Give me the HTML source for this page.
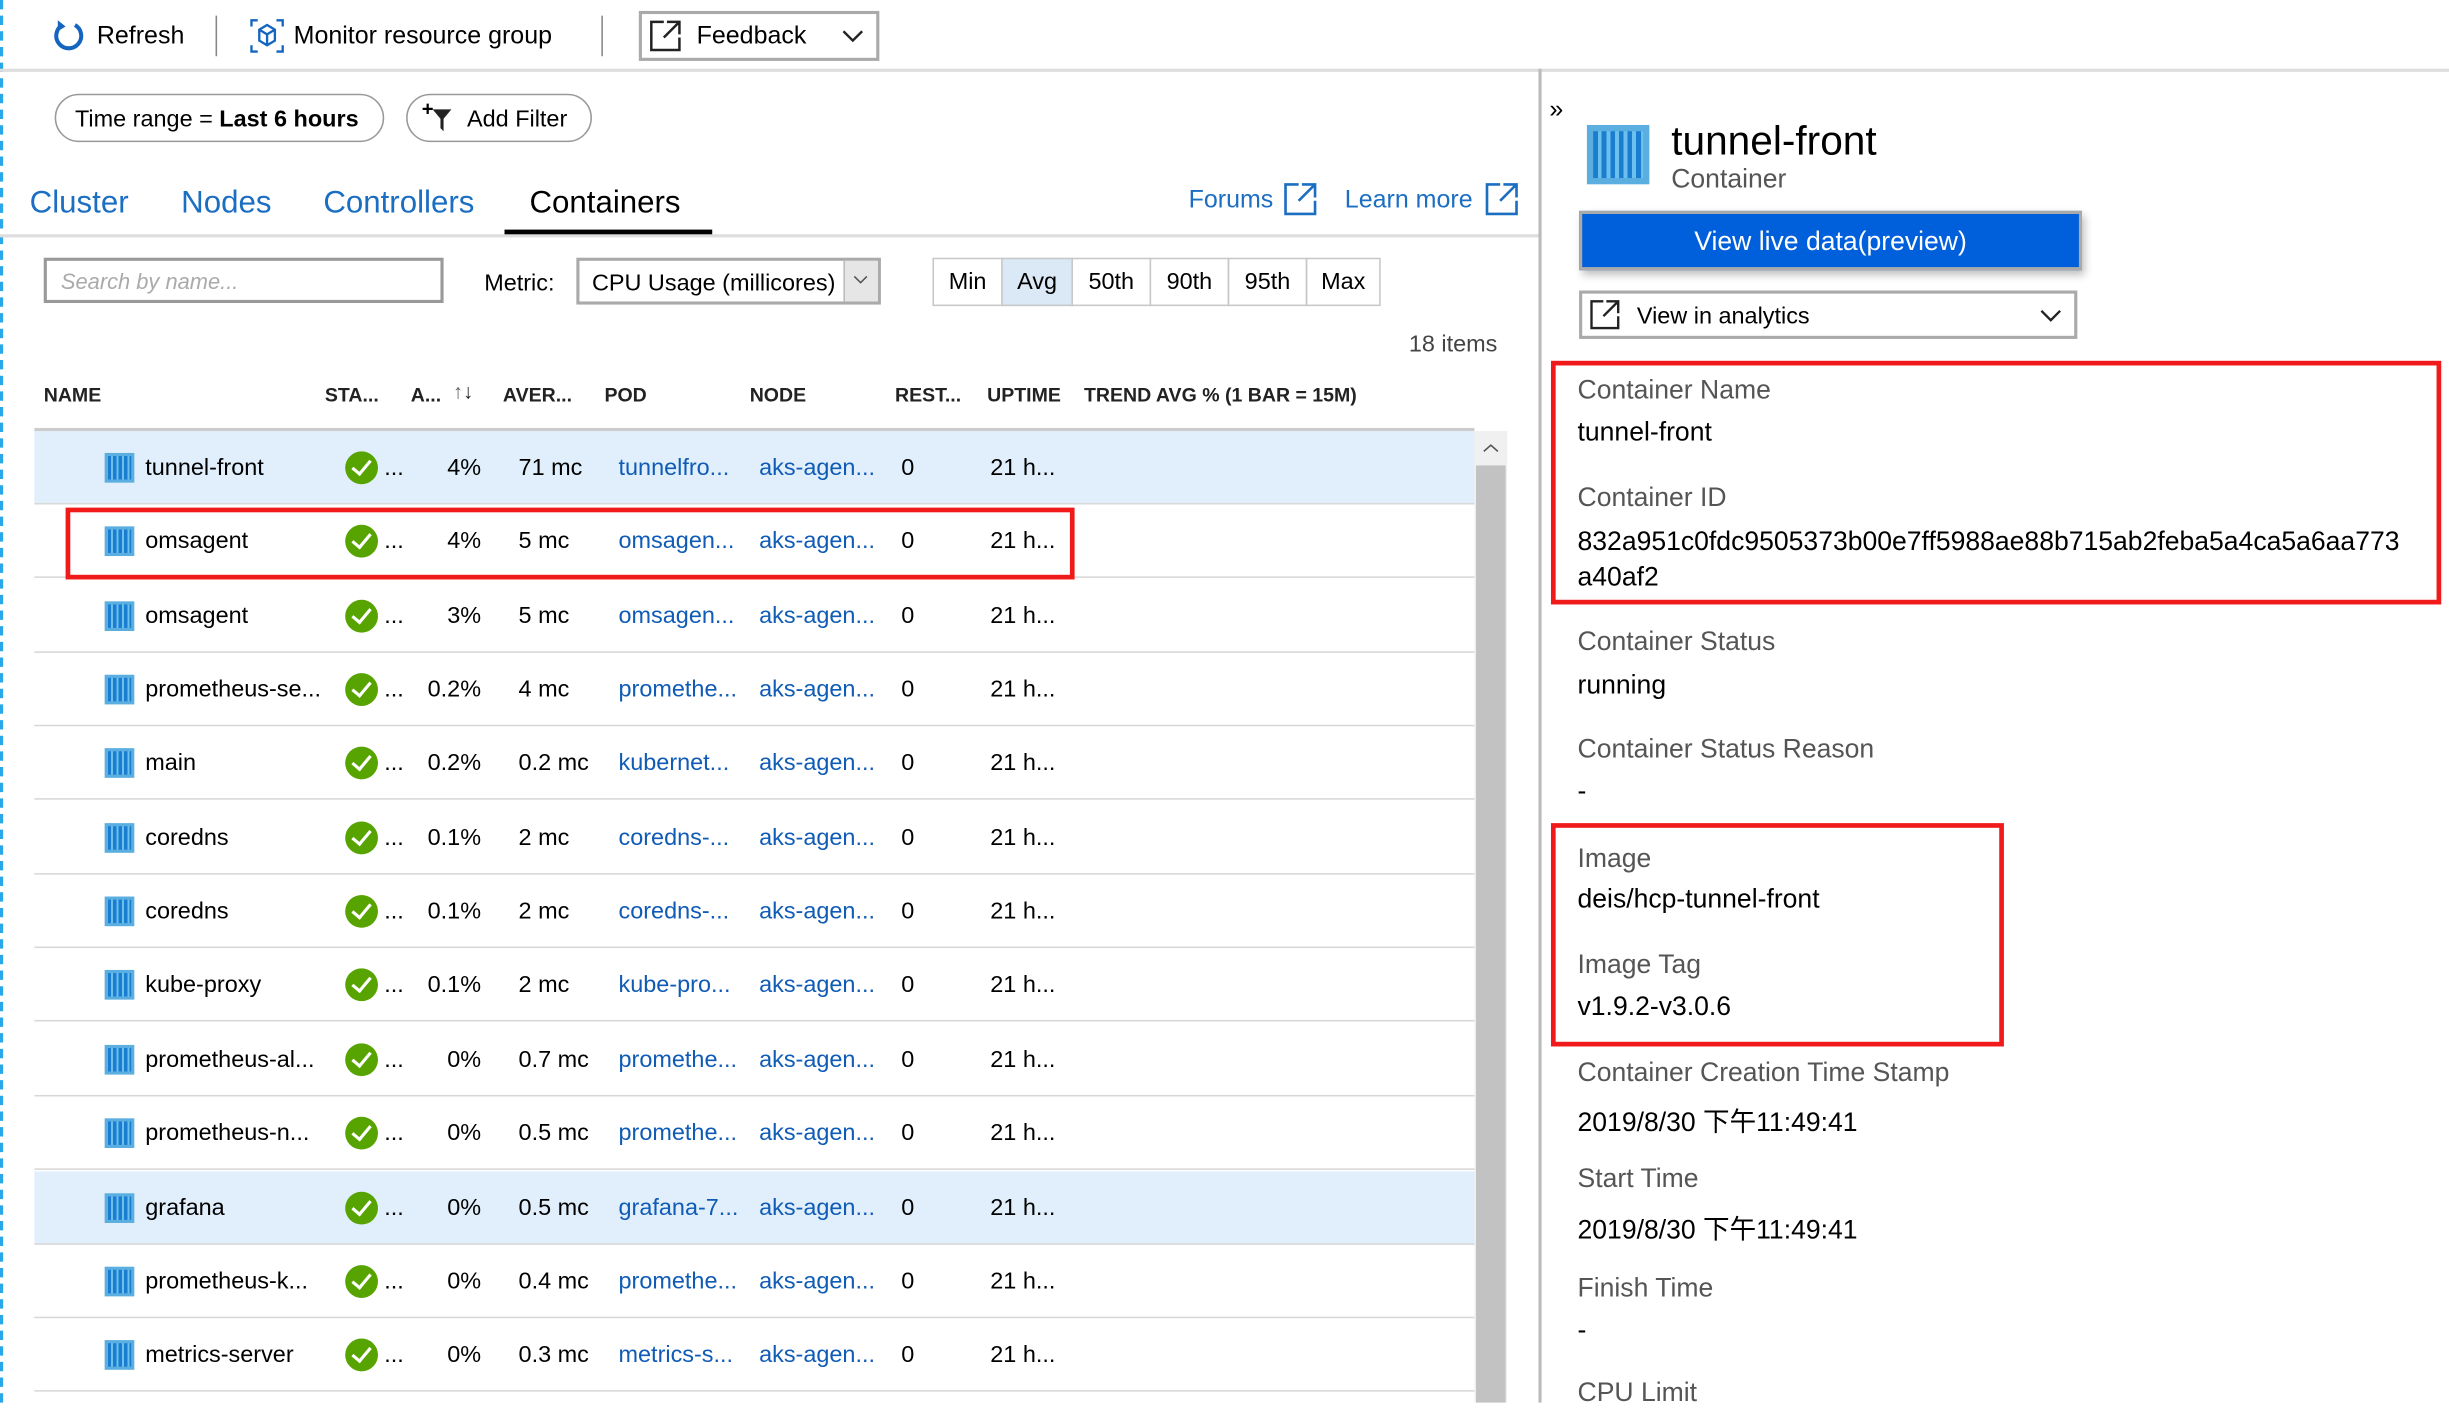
<!DOCTYPE html>
<html><head><meta charset="utf-8"><style>
*{margin:0;padding:0;box-sizing:border-box}
html,body{width:2449px;height:1403px;overflow:hidden;background:#fff}
#w{position:absolute;left:0;top:0;width:1568px;height:898px;transform:scale(1.5619);transform-origin:0 0;font-family:"Liberation Sans","Noto Sans CJK SC",sans-serif;color:#000;font-size:15px}
.a{position:absolute;white-space:nowrap}
.lnk{color:#0f5bb5}
.row{position:absolute;left:22px;width:922px;height:47px;border-bottom:1px solid #d8d8d8}
.row .a{top:15px}
.ic{position:absolute;left:45px;top:14px;width:19px;height:19px;background:#5aaee0;padding:2px}
.ic i{display:block;width:100%;height:100%;background:repeating-linear-gradient(90deg,#1a7dd0 0 2px,#6cc0ee 2px 3.5px)}
.ck{position:absolute;left:199px;top:13px;width:21px;height:21px;border-radius:50%;background:#57a300}
.ck:after{content:"";position:absolute;left:7px;top:3px;width:5px;height:10px;border:solid #fff;border-width:0 2.5px 2.5px 0;transform:rotate(40deg)}
.lb{position:absolute;left:1010px;color:#555;font-size:17px}
.vl{position:absolute;left:1010px;font-size:17px}
.red{position:absolute;border:3px solid #f01a1a}
.hd{position:absolute;top:246px;font-size:12.5px;font-weight:bold;color:#222}
.pc{position:absolute;top:165px;height:31px;border:1px solid #c8c8c8;font-size:15px;line-height:29px;text-align:center}
</style></head><body><div id="w">
<div class="a" style="left:0;top:0;width:2px;height:898px;border-left:2px dashed #29a7e8"></div>
<svg class="a" style="left:33px;top:12px" width="22" height="22" viewBox="0 0 22 22"><path d="M7 4 A8 8 0 1 0 15 4" fill="none" stroke="#1565c0" stroke-width="2.6"/><path d="M4 1 L9 5 L4 8Z" fill="#1565c0"/></svg>
<div class="a" style="left:62px;top:15px;font-size:16px">Refresh</div>
<div class="a" style="left:138px;top:10px;width:1px;height:26px;background:#888"></div>
<svg class="a" style="left:160px;top:12px" width="22" height="22" viewBox="0 0 22 22" fill="none" stroke="#1565c0" stroke-width="1.5"><path d="M1 5V1h4M17 1h4v4M21 17v4h-4M5 21H1v-4"/><path d="M11 4l5 3v7l-5 3-5-3V7z M6 7l5 3 5-3 M11 10v7"/></svg>
<div class="a" style="left:188px;top:15px;font-size:16px">Monitor resource group</div>
<div class="a" style="left:385px;top:10px;width:1px;height:26px;background:#888"></div>
<div class="a" style="left:409px;top:7px;width:154px;height:32px;border:2px solid #aaa"></div>
<svg class="a" style="left:416px;top:13px" width="20" height="20" viewBox="0 0 20 20" fill="none" stroke="#222" stroke-width="1.6"><path d="M9 1H1v18h18v-8M11 1h8v8M19 1 9 11"/></svg>
<div class="a" style="left:446px;top:15px;font-size:16px">Feedback</div>
<svg class="a" style="left:539px;top:18px" width="14" height="10"><path d="M1 2l6 6 6-6" fill="none" stroke="#222" stroke-width="1.5"/></svg>
<div class="a" style="left:0;top:44px;width:1568px;height:2px;background:#ddd"></div>
<div class="a" style="left:35px;top:60px;width:211px;height:31px;border:1.5px solid #999;border-radius:16px"></div>
<div class="a" style="left:48px;top:68px;font-size:15px">Time range = <b>Last 6 hours</b></div>
<div class="a" style="left:260px;top:60px;width:119px;height:31px;border:1.5px solid #999;border-radius:16px"></div>
<div class="a" style="left:270px;top:62px;font-size:13px;font-weight:bold">+</div>
<svg class="a" style="left:276px;top:69px" width="14" height="16"><path d="M1 1h12l-5 6v8l-2-2V7z" fill="#222"/></svg>
<div class="a" style="left:299px;top:68px;font-size:15px">Add Filter</div>
<div class="a" style="left:19px;top:119px;font-size:20px;color:#1b6ec2">Cluster</div>
<div class="a" style="left:116px;top:119px;font-size:20px;color:#1b6ec2">Nodes</div>
<div class="a" style="left:207px;top:119px;font-size:20px;color:#1b6ec2">Controllers</div>
<div class="a" style="left:339px;top:119px;font-size:20px;font-weight:500">Containers</div>
<div class="a" style="left:323px;top:147px;width:133px;height:4px;background:#000"></div>
<div class="a" style="left:0;top:150px;width:986px;height:2px;background:#ddd"></div>
<div class="a" style="left:761px;top:120px;font-size:16px;color:#1b6ec2">Forums</div>
<svg class="a" style="left:822px;top:117px" width="21" height="21" viewBox="0 0 20 20" fill="none" stroke="#1b6ec2" stroke-width="1.6"><path d="M9 1H1v18h18v-8M11 1h8v8M19 1 9 11"/></svg>
<div class="a" style="left:861px;top:120px;font-size:16px;color:#1b6ec2">Learn more</div>
<svg class="a" style="left:951px;top:117px" width="21" height="21" viewBox="0 0 20 20" fill="none" stroke="#1b6ec2" stroke-width="1.6"><path d="M9 1H1v18h18v-8M11 1h8v8M19 1 9 11"/></svg>
<div class="a" style="left:28px;top:165px;width:256px;height:29px;border:2px solid #999"></div>
<div class="a" style="left:39px;top:172px;font-size:14px;color:#aaa;font-style:italic">Search by name...</div>
<div class="a" style="left:310px;top:173px;font-size:15px">Metric:</div>
<div class="a" style="left:369px;top:165px;width:195px;height:30px;border:2px solid #aaa"></div>
<div class="a" style="left:540px;top:167px;width:22px;height:26px;background:#e6e6e6;border-left:1px solid #bbb"></div>
<svg class="a" style="left:546px;top:176px" width="10" height="7"><path d="M1 1l4 4 4-4" fill="none" stroke="#555"/></svg>
<div class="a" style="left:379px;top:173px;font-size:15px">CPU Usage (millicores)</div>
<div class="pc" style="left:597px;width:45px">Min</div>
<div class="pc" style="left:641px;width:46px;background:#dbe9f7">Avg</div>
<div class="pc" style="left:686px;width:51px">50th</div>
<div class="pc" style="left:736px;width:51px">90th</div>
<div class="pc" style="left:786px;width:51px">95th</div>
<div class="pc" style="left:836px;width:48px">Max</div>
<div class="a" style="left:902px;top:212px;font-size:15px;color:#444">18 items</div>
<div class="hd" style="left:28px">NAME</div>
<div class="hd" style="left:208px">STA...</div>
<div class="hd" style="left:263px">A...</div>
<div class="a" style="left:290px;top:243px;font-size:13px;color:#666">↑<span style="color:#222">↓</span></div>
<div class="hd" style="left:322px">AVER...</div>
<div class="hd" style="left:387px">POD</div>
<div class="hd" style="left:480px">NODE</div>
<div class="hd" style="left:573px">REST...</div>
<div class="hd" style="left:632px">UPTIME</div>
<div class="hd" style="left:694px">TREND AVG % (1 BAR = 15M)</div>
<div class="a" style="left:22px;top:274px;width:922px;height:2px;background:#ccc"></div>
<div class="a" style="left:944px;top:276px;width:21px;height:622px;background:#f0f0f0"></div>
<div class="a" style="left:945px;top:298px;width:19px;height:600px;background:#c2c2c2"></div>
<svg class="a" style="left:949px;top:283px" width="11" height="8"><path d="M1 6l4.5-4 4.5 4" fill="none" stroke="#555"/></svg>
<div id="rows"></div>
<div class="a" style="left:985px;top:44px;width:2px;height:854px;background:#bbb"></div>
<div class="a" style="left:992px;top:62px;font-size:16px">»</div>
<div class="a" style="left:1016px;top:80px;width:40px;height:38px;background:#5aaee0;padding:4px"><div style="width:100%;height:100%;background:repeating-linear-gradient(90deg,#1a7dd0 0 3px,#6cc0ee 3px 5.5px)"></div></div>
<div class="a" style="left:1070px;top:75px;font-size:26px">tunnel-front</div>
<div class="a" style="left:1070px;top:105px;font-size:17px;color:#555">Container</div>
<div class="a" style="left:1011px;top:135px;width:322px;height:38px;background:#005fdb;border:2px solid #aaa;box-shadow:2px 3px 5px rgba(0,0,0,.25);color:#fff;font-size:17px;text-align:center;line-height:36px">View live data(preview)</div>
<div class="a" style="left:1011px;top:186px;width:319px;height:31px;border:2px solid #aaa"></div>
<svg class="a" style="left:1018px;top:192px" width="19" height="19" viewBox="0 0 20 20" fill="none" stroke="#222" stroke-width="1.6"><path d="M9 1H1v18h18v-8M11 1h8v8M19 1 9 11"/></svg>
<div class="a" style="left:1048px;top:194px;font-size:15px">View in analytics</div>
<svg class="a" style="left:1306px;top:197px" width="14" height="10"><path d="M1 2l6 6 6-6" fill="none" stroke="#222" stroke-width="1.5"/></svg>
<div class="lb" style="top:240px">Container Name</div><div class="vl" style="top:267px">tunnel-front</div>
<div class="lb" style="top:309px">Container ID</div><div class="vl" style="top:337px">832a951c0fdc9505373b00e7ff5988ae88b715ab2feba5a4ca5a6aa773</div><div class="vl" style="top:360px">a40af2</div>
<div class="lb" style="top:401px">Container Status</div><div class="vl" style="top:429px">running</div>
<div class="lb" style="top:470px">Container Status Reason</div><div class="vl" style="top:497px">-</div>
<div class="lb" style="top:540px">Image</div><div class="vl" style="top:566px">deis/hcp-tunnel-front</div>
<div class="lb" style="top:608px">Image Tag</div><div class="vl" style="top:635px">v1.9.2-v3.0.6</div>
<div class="lb" style="top:677px">Container Creation Time Stamp</div><div class="vl" style="top:704px">2019/8/30 下午11:49:41</div>
<div class="lb" style="top:745px">Start Time</div><div class="vl" style="top:773px">2019/8/30 下午11:49:41</div>
<div class="lb" style="top:815px">Finish Time</div><div class="vl" style="top:842px">-</div>
<div class="lb" style="top:882px">CPU Limit</div>
<div class="red" style="left:993px;top:231px;width:570px;height:156px"></div>
<div class="red" style="left:993px;top:527px;width:290px;height:143px"></div>
<div class="red" style="left:42px;top:325px;width:646px;height:46px"></div>
</div>
<script>
var d=[["tunnel-front","4%","71 mc","tunnelfro..."],["omsagent","4%","5 mc","omsagen..."],["omsagent","3%","5 mc","omsagen..."],["prometheus-se...","0.2%","4 mc","promethe..."],["main","0.2%","0.2 mc","kubernet..."],["coredns","0.1%","2 mc","coredns-..."],["coredns","0.1%","2 mc","coredns-..."],["kube-proxy","0.1%","2 mc","kube-pro..."],["prometheus-al...","0%","0.7 mc","promethe..."],["prometheus-n...","0%","0.5 mc","promethe..."],["grafana","0%","0.5 mc","grafana-7..."],["prometheus-k...","0%","0.4 mc","promethe..."],["metrics-server","0%","0.3 mc","metrics-s..."]];
var h="";d.forEach(function(r,i){var t=276+i*47.35;var bg=(i==0||i==10)?"background:#e0effb;":"";
h+='<div class="row" style="top:'+t+'px;'+bg+'"><div class="ic"><i></i></div><div class="a" style="left:71px">'+r[0]+'</div><div class="ck"></div><div class="a" style="left:224px">...</div><div class="a" style="left:246px;width:40px;text-align:right">'+r[1]+'</div><div class="a" style="left:310px">'+r[2]+'</div><div class="a lnk" style="left:374px">'+r[3]+'</div><div class="a lnk" style="left:464px">aks-agen...</div><div class="a" style="left:555px">0</div><div class="a" style="left:612px">21 h...</div></div>';});
document.getElementById("rows").innerHTML=h;
</script>
</body></html>
